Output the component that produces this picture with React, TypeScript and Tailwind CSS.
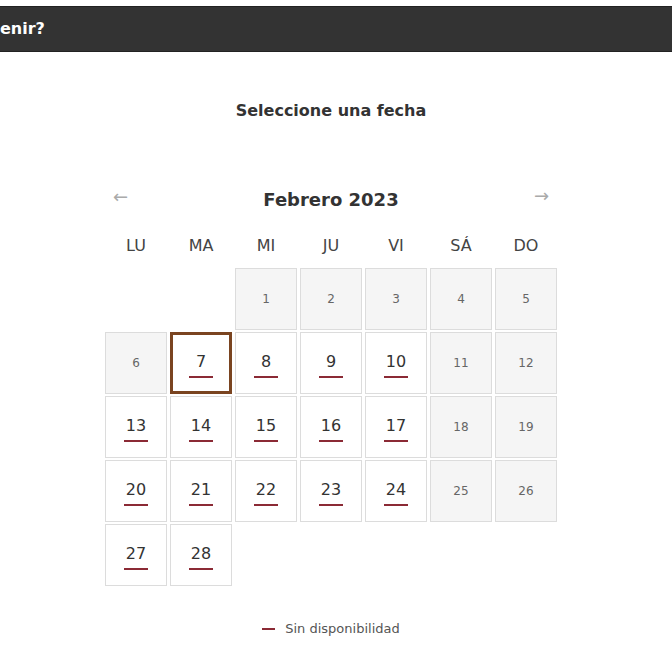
import React from 'react';

type Day = { n: number; available: boolean; selected?: boolean };

const weekDays = ['LU', 'MA', 'MI', 'JU', 'VI', 'SÁ', 'DO'];

const unavailable = new Set([1, 2, 3, 4, 5, 6, 11, 12, 18, 19, 25, 26]);

const days: (Day | null)[] = [
  null,
  null,
  ...Array.from({ length: 28 }, (_, i) => ({
    n: i + 1,
    available: !unavailable.has(i + 1),
    selected: i + 1 === 7,
  })),
];

const DayCell: React.FC<{ day: Day | null }> = ({ day }) => {
  if (!day) return <div className="h-[62px]" />;
  if (!day.available) {
    return (
      <div className="h-[62px] bg-[#f5f5f5] border border-[#dcdcdc] flex items-center justify-center text-[12px] text-[#666]">
        {day.n}
      </div>
    );
  }
  return (
    <button
      className={`h-[62px] bg-white flex flex-col items-center justify-center pt-[3px] ${
        day.selected ? 'border-[3px] border-[#7a4420]' : 'border border-[#dcdcdc]'
      }`}
    >
      <span className="text-[16px] leading-[20px] text-[#333]">{day.n}</span>
      <span className="mt-[4px] h-[2px] w-[24px] bg-[#8b2a35]" />
    </button>
  );
};

export default function App() {
  return (
    <div className="min-h-[664px] bg-white font-['DejaVu_Sans',Verdana,sans-serif] pt-[6px]">
      {/* Header bar */}
      <div className="h-[46px] bg-[#333] border-y border-[#222] flex items-center">
        <span className="text-white font-bold text-[16px]">enir?</span>
      </div>

      <div className="w-[452px] ml-[105px]">
        <h2 className="mt-[47px] text-center font-bold text-[16px] text-[#333]">Seleccione una fecha</h2>

        {/* Month nav */}
        <div className="mt-[63px] flex items-center justify-between px-[8px]">
          <button className="text-[#aaa] text-[18px] leading-none pb-[6px]">←</button>
          <span className="font-bold text-[18px] text-[#333]">Febrero 2023</span>
          <button className="text-[#aaa] text-[18px] leading-none pb-[8px]">→</button>
        </div>

        {/* Week days */}
        <div className="mt-[21px] grid grid-cols-7 gap-[3px]">
          {weekDays.map((d) => (
            <div key={d} className="text-center text-[16px] text-[#444]">
              {d}
            </div>
          ))}
        </div>

        {/* Days grid */}
        <div className="mt-[10px] grid grid-cols-7 gap-x-[3px] gap-y-[2px]">
          {days.map((d, i) => (
            <DayCell key={i} day={d} />
          ))}
        </div>

        {/* Legend */}
        <div className="mt-[33px] flex items-center justify-center gap-[10px] text-[13px] text-[#555]">
          <span className="h-[2px] w-[13px] bg-[#8b2a35]" />
          <span>Sin disponibilidad</span>
        </div>
      </div>
    </div>
  );
}
